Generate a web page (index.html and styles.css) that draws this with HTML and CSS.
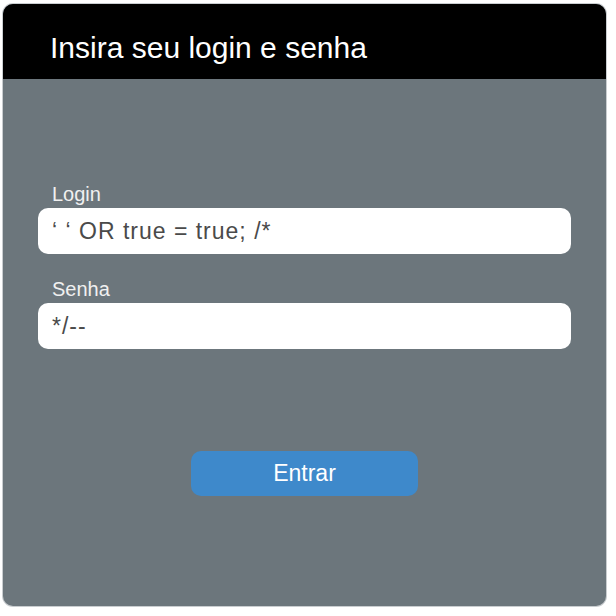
FILE: index.html
```html
<!DOCTYPE html>
<html lang="pt">
<head>
<meta charset="utf-8">
<title>Login</title>
<link rel="stylesheet" href="styles.css">
</head>
<body>
<div class="card">
  <div class="card-header">Insira seu login e senha</div>
  <form class="card-body">
    <div class="field">
      <label class="field-label">Login</label>
      <div class="field-input">‘ ‘ OR true = true; /*</div>
    </div>
    <div class="field">
      <label class="field-label">Senha</label>
      <div class="field-input">*/--</div>
    </div>
    <button type="button" class="btn">Entrar</button>
  </form>
</div>
</body>
</html>
```
FILE: styles.css
```css
* { box-sizing: border-box; }
html, body { margin: 0; padding: 0; background: #ffffff; }
body {
  font-family: "Liberation Sans", Arial, sans-serif;
  padding: 4px 10px 10px 3px;
}
.card {
  width: 603px;
  height: 602px;
  border-radius: 10px;
  background: #6c767c;
  overflow: hidden;
  box-shadow: 0 0 0 1px #c9cdd0;
  display: flex;
  flex-direction: column;
}
.card-header {
  height: 75px;
  background: #000000;
  color: #ffffff;
  font-size: 30px;
  padding: 12px 0 0 47px;
  line-height: 63px;
}
.card-body {
  margin: 0;
  padding: 103px 35px 0 35px;
  display: flex;
  flex-direction: column;
  gap: 23px;
}
.field {
  display: flex;
  flex-direction: column;
  gap: 2px;
}
.field-label {
  color: #f0f0f0;
  font-size: 20px;
  line-height: 24px;
  padding-left: 14px;
}
.field-input {
  height: 46px;
  background: #ffffff;
  border-radius: 10px;
  color: #4a4a4a;
  font-size: 23px;
  letter-spacing: 1px;
  line-height: 46px;
  padding-left: 14px;
}
.btn {
  align-self: center;
  margin-top: 79px;
  width: 227px;
  height: 45px;
  border: none;
  border-radius: 10px;
  background: #3e89cb;
  color: #ffffff;
  font-family: inherit;
  font-size: 23px;
  padding: 0;
}
```
